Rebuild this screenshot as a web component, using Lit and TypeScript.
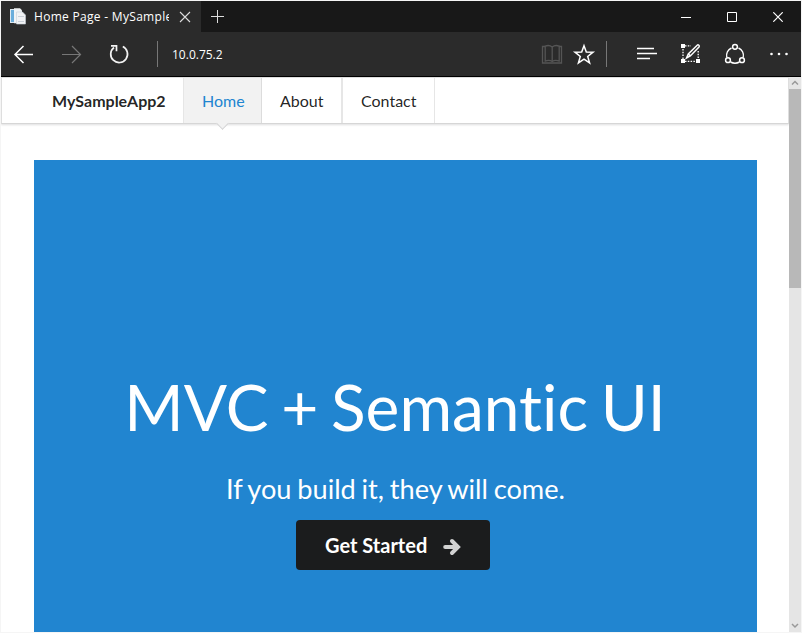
import { LitElement, html, css } from "lit";
import { customElement } from "lit/decorators.js";

@customElement("browser-chrome")
class BrowserChrome extends LitElement {
  static styles = css`
    :host { display: block; font-family: "Open Sans", "Noto Sans", sans-serif; font-size: 12px; color: #fff; }
    svg { display: block; fill: none; stroke: #fff; flex: none; }
    .strip { height: 31px; background: #181818; display: flex; }
    .tab { width: 200px; height: 31px; background: #2b2b2b; display: flex; align-items: center; box-sizing: border-box; padding-left: 8px; }
    .title { width: 135px; margin-left: 8px; overflow: hidden; white-space: nowrap; line-height: 20px; letter-spacing: 0.3px; }
    .tabx { margin-left: 10px; }
    .plus { margin: 9px 0 0 10px; }
    .win { margin-left: auto; width: 138px; display: grid; grid-template-columns: repeat(3, 46px); justify-items: center; align-items: center; }
    .bar { height: 44px; background: #2b2b2b; border-bottom: 1px solid #000; display: flex; align-items: center; }
    .sep { width: 1px; height: 26px; background: #777; }
    .nav { width: 156px; }
    .addr { padding-left: 14px; flex: 1; }
  `;
  render() {
    return html`
      <div class="strip">
        <div class="tab">
          <svg width="17" height="17" viewBox="0 0 17 17" stroke="none">
            <path d="M1 1h9l2 2v12H1z" fill="#dce8f0" stroke="none" />
            <path d="M2 2h3v12H2z" fill="#6aaddb" stroke="none" />
            <path d="M5 .300h6l2 2v13H5z" fill="#f0f3f5" stroke="none" />
            <path d="M7.500 4h6l3 3v9h-9z" fill="#f1f2f4" stroke="#c8d0d8" stroke-width=".6" />
            <path d="M9 8.500h6M9 13.500h6" stroke="#c9d0d8" />
          </svg>
          <div class="title">Home Page - MySample</div>
          <svg class="tabx" width="12" height="12"><path d="M1 1l10 10M11 1L1 11" stroke="#ddd" stroke-width="1.1" /></svg>
        </div>
        <svg class="plus" width="14" height="14"><path d="M0 6.500h13M6.500 0v13" stroke="#ddd" /></svg>
        <div class="win">
          <svg width="10" height="10"><path d="M0 5.500h10" /></svg>
          <svg width="10" height="10"><path d="M.5.5h9v9h-9z" /></svg>
          <svg width="10" height="10"><path d="M.3.3l9.400 9.400M9.700.3l-9.400 9.400" stroke-width="1.200" /></svg>
        </div>
      </div>
      <div class="bar">
        <svg class="nav" width="156" height="44">
          <path d="M13.500 22.500H32M22.500 14l-8.500 8.500 8.500 8.500" stroke-width="1.500" />
          <path d="M61 22.500h18M71 14l8.500 8.500-8.500 8.500" stroke="#777" stroke-width="1.200" />
          <path d="M121.800 14.600A8.400 8.400 0 1 1 113 15.500M110 13.800h5.500v5.500" stroke="#f2f2f2" stroke-width="1.700" />
        </svg>
        <div class="sep"></div>
        <div class="addr">10.0.75.2</div>
        <svg width="260" height="44" viewBox="541 32 260 44">
          <g stroke="#555" stroke-width="1.300">
            <path d="M545 46.500h-2.500v16.500h19v-16.500h-2.500" />
            <path d="M552.200 62V47c-1.800-1.500-5-1.700-7-.9V61c2.500-.7 5.300-.7 7 .5zM552.200 62V47c1.800-1.500 5-1.700 7-.9V61c-2.500-.7-5.300-.7-7 .5z" />
          </g>
          <path d="M584 45.800l2.300 6.300 6.700.1-5.300 4.200 1.900 6.500-5.600-3.800-5.600 3.800 1.900-6.500-5.300-4.200 6.700-.1z" stroke-width="1.500" />
          <path d="M606.500 41v26" stroke="#777" />
          <path d="M637 48.500h17M637 53.500h20M637 58.500h13" stroke-width="1.400" />
          <g>
            <path d="M685 45.900h6M683 49v10M685 61.300h12M698.200 51v9" stroke-width="1.300" stroke-dasharray="1.500 1.300" />
            <path d="M681 44h4v4h-4zM681 59h4v4h-4zM696 59h4v4h-4z" fill="#fff" stroke="none" />
            <path d="M686.500 58l1.800-4 8.900-8.800c1-1 2.800.5 1.800 1.700l-8.700 9zM688.500 54l2 2" stroke-width="1.500" />
          </g>
          <g stroke-width="1.500">
            <path d="M731.500 48a8.400 8.400 0 0 0-4.700 9.500M738.500 48a8.400 8.400 0 0 1 4.700 9.500M730.500 62a10 10 0 0 0 9 0" />
            <circle cx="735" cy="46.800" r="2.400" /><circle cx="728" cy="60.200" r="2.400" /><circle cx="742" cy="60.200" r="2.400" />
          </g>
          <g fill="#fff" stroke="none"><circle cx="771.500" cy="54" r="1.300" /><circle cx="779" cy="54" r="1.300" /><circle cx="786.500" cy="54" r="1.300" /></g>
        </svg>
      </div>`;
  }
}

@customElement("site-page")
class SitePage extends LitElement {
  static styles = css`
    :host { display: flex; flex: 1; min-height: 0; font-family: Lato, "Liberation Sans", sans-serif; background: #fff; font-variant-ligatures: none; }
    .page { flex: 1; display: flex; flex-direction: column; min-width: 0; }
    .menu { height: 45px; flex: none; border: 1px solid #dedede; border-bottom-color: #d6d6d6; box-shadow: 0 1px 2px rgba(34, 36, 38, .15); display: flex; line-height: 46px; font-size: 16px; color: rgba(0, 0, 0, .87); padding-left: 32px; }
    .item { box-sizing: border-box; padding-left: 18px; border-right: 1px solid #e6e6e6; white-space: nowrap; position: relative; }
    .brand { width: 150px; font-weight: 700; }
    .home { width: 78px; background: #f2f2f2; color: #2185d0; border-right-color: #dcdcdc; }
    .home::after { content: ""; position: absolute; width: 8px; height: 8px; left: 34px; bottom: -5px; background: #f2f2f2; border: solid #d4d4d5; border-width: 0 1px 1px 0; transform: rotate(45deg); }
    .about { width: 81px; border-right-width: 2px; }
    .contact { width: 92px; }
    .hero { flex: 1; margin: 36px 32px 0 33px; background: #2185d0; color: #fff; display: flex; flex-direction: column; align-items: center; }
    h1 { margin: 207px 0 0; font-size: 64px; line-height: 80px; font-weight: 400; white-space: nowrap; word-spacing: -3.700px; transform: translateX(-0.500px); }
    h2 { margin: 22px 0 0; font-size: 27.200px; line-height: 40px; font-weight: 400; white-space: nowrap; word-spacing: -1.200px; }
    .button { margin: 11px 5px 0 0; width: 194px; height: 50px; border-radius: 4px; background: #1b1c1d; box-sizing: border-box; padding-left: 29px; display: flex; align-items: center; font-size: 20px; font-weight: 700; white-space: nowrap; }
    .label { width: 117px; }
    .button svg { display: block; margin-top: 3px; }
    .scroll { width: 12px; background: #e5e5e5; display: flex; flex-direction: column; }
    .scroll svg { display: block; fill: none; stroke: #999; stroke-width: 1.500; flex: none; }
    .thumb { height: 199px; background: #b8b8b8; }
    .scroll .down { margin-top: auto; }
  `;
  render() {
    return html`
      <div class="page">
        <div class="menu">
          <div class="item brand">MySampleApp2</div>
          <div class="item home">Home</div>
          <div class="item about">About</div>
          <div class="item contact">Contact</div>
        </div>
        <div class="hero">
          <h1>MVC + Semantic UI</h1>
          <h2>If you build it, they will come.</h2>
          <div class="button">
            <span class="label">Get Started</span>
            <svg width="20" height="20"><path d="M3.200 10H15M10 4l6 6-6 6" fill="none" stroke="#d2d2d2" stroke-width="4" stroke-linecap="round" /></svg>
          </div>
        </div>
      </div>
      <div class="scroll">
        <svg width="12" height="12"><path d="M3 7.500l3-3 3 3" /></svg>
        <div class="thumb"></div>
        <svg class="down" width="12" height="13"><path d="M3 5l3 3 3-3" /></svg>
      </div>`;
  }
}

@customElement("app-root")
class AppRoot extends LitElement {
  static styles = css`
    :host { display: flex; flex-direction: column; box-sizing: border-box; width: 802px; height: 633px; border: 1px solid #f5f5f5; overflow: hidden; }
  `;
  render() {
    return html`<browser-chrome></browser-chrome><site-page></site-page>`;
  }
}
